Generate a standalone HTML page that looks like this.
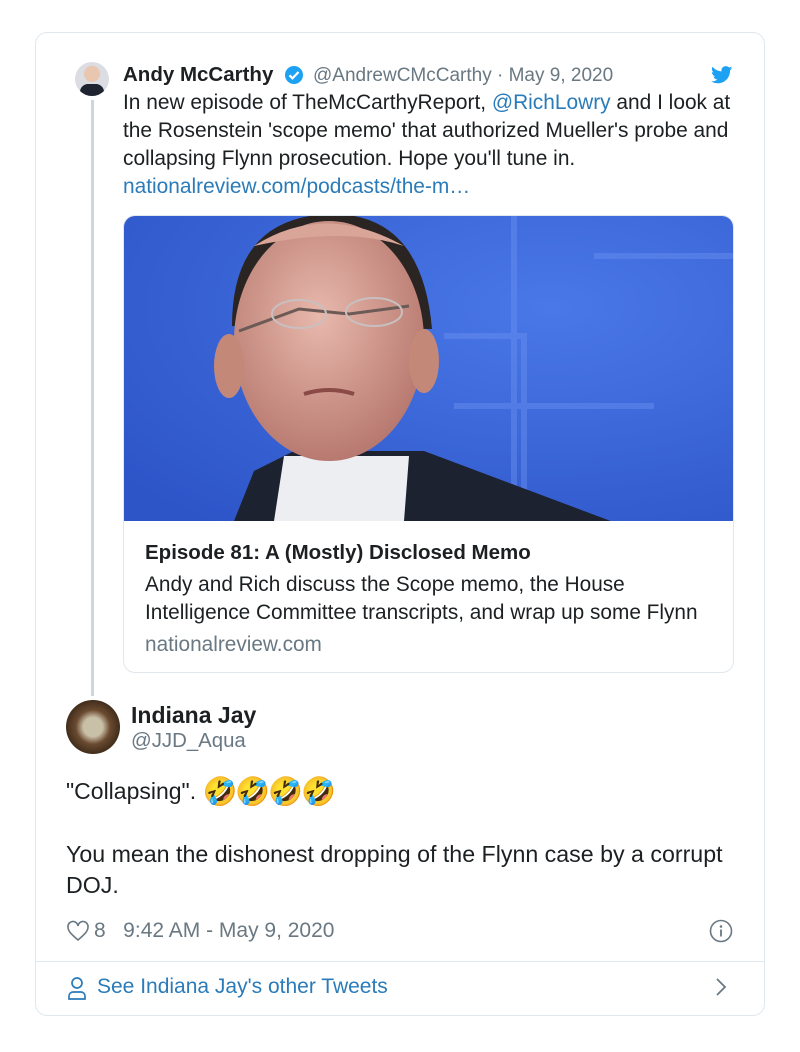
<!DOCTYPE html>
<html><head><meta charset="utf-8"><style>
*{margin:0;padding:0;box-sizing:border-box}
body{width:800px;height:1052px;background:#fff;font-family:"Liberation Sans",Arial,sans-serif;color:#1c2022;position:relative;overflow:hidden}
.card{position:absolute;left:35px;top:32px;width:730px;height:984px;border:1px solid #e1e8ed;border-radius:12px}
.abs{position:absolute;white-space:nowrap}
.t{font-size:20.9px}
.blue{color:#2b7bb9}
.gray{color:#697882}
</style></head><body>
<div class="card"></div>
<div class="abs" style="left:75px;top:62px;width:34px;height:34px;border-radius:50%;background:radial-gradient(circle at 50% 35%,#e8c6b0 0 28%,#dcdde2 30%);overflow:hidden"><div style="position:absolute;left:5px;top:22px;width:24px;height:14px;background:#1e2430;border-radius:8px 8px 0 0"></div></div>
<div class="abs" style="left:91px;top:100px;width:3px;height:596px;background:#cbd6de"></div>
<div class="abs" style="left:123px;top:63px;font-size:20.5px;font-weight:bold">Andy McCarthy</div>
<svg class="abs" style="left:284px;top:65px" width="20" height="20" viewBox="0 0 20 20"><circle cx="10" cy="10" r="9" fill="#1da1f2"/><path d="M5.5 10.3l3 3 6-6.3" stroke="#fff" stroke-width="2.2" fill="none"/></svg>
<div class="abs gray" style="left:313px;top:65px;font-size:19px">@AndrewCMcCarthy · May 9, 2020</div>
<svg class="abs" style="left:711px;top:66px" width="22" height="18" viewBox="0 0 24 20"><path d="M23.6 2.4c-.9.4-1.8.6-2.8.8 1-.6 1.800-1.600 2.100-2.700-.9.6-2 1-3.1 1.2C18.9.7 17.6.1 16.2.1c-2.7 0-4.8 2.2-4.8 4.8 0 .4 0 .8.1 1.1C7.4 5.8 3.9 3.9 1.5.9c-.4.7-.7 1.6-.7 2.4 0 1.7.9 3.2 2.2 4-.8 0-1.5-.2-2.2-.6v.1c0 2.3 1.7 4.3 3.9 4.7-.4.1-.8.2-1.3.2-.3 0-.6 0-.9-.1.6 1.9 2.4 3.3 4.5 3.4-1.7 1.3-3.7 2.1-6 2.1-.4 0-.8 0-1.2-.1 2.1 1.4 4.7 2.2 7.4 2.2 8.9 0 13.7-7.4 13.700-13.700v-.6c1-.7 1.8-1.6 2.4-2.5z" fill="#1da1f2"/></svg>
<div class="abs t" style="left:123px;top:91px">In new episode of TheMcCarthyReport, <span class="blue">@RichLowry</span> and I look at</div>
<div class="abs t" style="left:123px;top:119px">the Rosenstein 'scope memo' that authorized Mueller's probe and</div>
<div class="abs t" style="left:123px;top:147px">collapsing Flynn prosecution. Hope you'll tune in.</div>
<div class="abs t blue" style="left:123px;top:175px">nationalreview.com/podcasts/the-m…</div>
<div class="abs" style="left:123px;top:215px;width:611px;height:458px;border:1px solid #e1e8ed;border-radius:12px;overflow:hidden">
<svg width="611" height="305" viewBox="0 0 611 305" style="display:block">
<defs><radialGradient id="bg" cx="0.7" cy="0.3" r="0.9"><stop offset="0" stop-color="#4a78e8"/><stop offset="1" stop-color="#2d55c8"/></radialGradient>
<radialGradient id="sk" cx="0.45" cy="0.4" r="0.6"><stop offset="0" stop-color="#e8b8ac"/><stop offset="1" stop-color="#b87a70"/></radialGradient></defs>
<rect width="611" height="305" fill="url(#bg)"/>
<path d="M390 0v305M470 40h140M320 120h80v185M330 190h200" stroke="#6a90f0" stroke-width="6" fill="none" opacity=".45"/>
<path d="M110 305l20-50 40-20h130l40 15 160 60z" fill="#1d2230"/>
<path d="M150 305l10-65h125l-5 65z" fill="#eceef2"/>
<path d="M108 110q0-110 100-112q90 0 100 115z" fill="#2a2522"/>
<ellipse cx="205" cy="125" rx="95" ry="120" fill="url(#sk)"/>
<path d="M130 30q70-45 150 0q-60-20-150 0z" fill="#d9a598"/>
<ellipse cx="105" cy="150" rx="15" ry="32" fill="#c48878"/>
<ellipse cx="300" cy="145" rx="15" ry="32" fill="#c48878"/>
<path d="M115 115l60-22 50 5 60-8" stroke="#6b5a55" stroke-width="3" fill="none"/>
<ellipse cx="175" cy="98" rx="27" ry="14" fill="none" stroke="#c8c0c0" stroke-width="2"/>
<ellipse cx="250" cy="96" rx="28" ry="14" fill="none" stroke="#c8c0c0" stroke-width="2"/>
<path d="M180 178q25-8 50 0" stroke="#8a4a45" stroke-width="4" fill="none"/>
</svg>
<div class="abs" style="left:21px;top:325px;font-size:20.5px;font-weight:bold">Episode 81: A (Mostly) Disclosed Memo</div>
<div class="abs" style="left:21px;top:357px;font-size:20.8px">Andy and Rich discuss the Scope memo, the House</div>
<div class="abs" style="left:21px;top:385px;font-size:20.8px">Intelligence Committee transcripts, and wrap up some Flynn</div>
<div class="abs gray" style="left:21px;top:417px;font-size:20.8px">nationalreview.com</div>
</div>
<div class="abs" style="left:66px;top:700px;width:54px;height:54px;border-radius:50%;background:radial-gradient(circle at 50% 50%,#c9c0a8 0 25%,#6a4a30 45%,#3a2818 75%)"></div>
<div class="abs" style="left:131px;top:702px;font-size:23px;font-weight:bold">Indiana Jay</div>
<div class="abs gray" style="left:131px;top:730px;font-size:20.4px">@JJD_Aqua</div>
<div class="abs" style="left:66px;top:775px;font-size:23px">"Collapsing". <span style="letter-spacing:-2px;font-size:28px;vertical-align:-2px">🤣🤣🤣🤣</span></div>
<div class="abs" style="left:66px;top:841px;font-size:23.2px">You mean the dishonest dropping of the Flynn case by a corrupt</div>
<div class="abs" style="left:66px;top:872px;font-size:23.2px">DOJ.</div>
<svg class="abs" style="left:66px;top:920px" width="24" height="22" viewBox="0 0 24 22"><path d="M12 20C5 14 2 11 2 7a5 5 0 0 1 10-1 5 5 0 0 1 10 1c0 4-3 7-10 13z" fill="none" stroke="#697882" stroke-width="1.6"/></svg>
<div class="abs gray" style="left:94px;top:919px;font-size:21px">8&nbsp;&nbsp;&nbsp;9:42 AM - May 9, 2020</div>
<svg class="abs" style="left:709px;top:919px" width="24" height="24" viewBox="0 0 24 24"><circle cx="12" cy="12" r="10.5" fill="none" stroke="#697882" stroke-width="1.6"/><circle cx="12" cy="7.5" r="1.3" fill="#697882"/><path d="M12 10.5v7" stroke="#697882" stroke-width="1.8"/></svg>
<div class="abs" style="left:36px;top:961px;width:728px;height:1px;background:#e1e8ed"></div>
<svg class="abs" style="left:66px;top:975px" width="22" height="26" viewBox="0 0 22 26"><circle cx="11" cy="8" r="5" fill="none" stroke="#2b7bb9" stroke-width="1.7"/><path d="M3 24v-3a4 4 0 0 1 4-4h8a4 4 0 0 1 4 4v3z" fill="none" stroke="#2b7bb9" stroke-width="1.7"/></svg>
<div class="abs blue" style="left:97px;top:975px;font-size:21px">See Indiana Jay's other Tweets</div>
<svg class="abs" style="left:714px;top:976px" width="14" height="22" viewBox="0 0 14 22"><path d="M3 3l8 8-8 8" fill="none" stroke="#697882" stroke-width="1.8"/></svg>
</body></html>
